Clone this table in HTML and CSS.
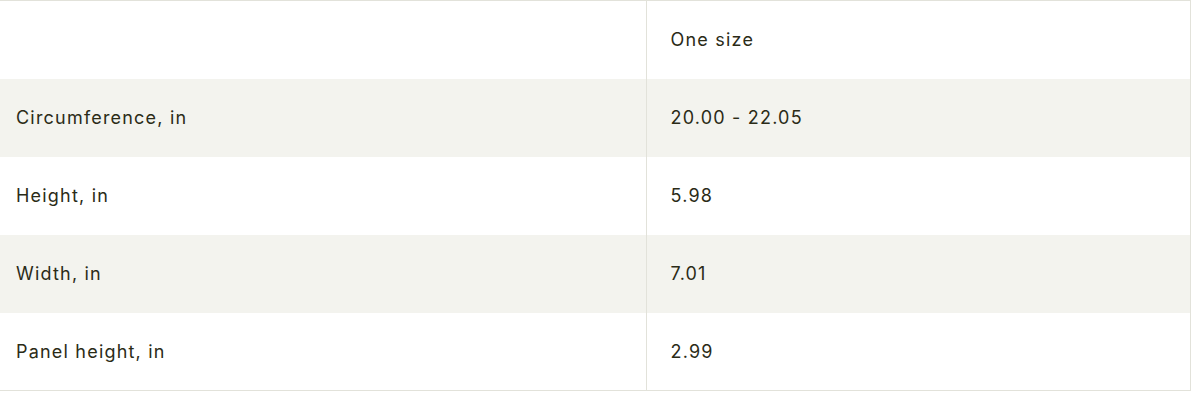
FILE: index.html
```html
<!DOCTYPE html>
<html lang="en">
<head>
<meta charset="utf-8">
<link rel="stylesheet" href="styles.css">
<title>Size chart</title>
</head>
<body>
<table class="sizes">
  <tbody>
    <tr class="row">
      <td class="label"></td>
      <td class="value">One size</td>
    </tr>
    <tr class="row alt">
      <td class="label">Circumference, in</td>
      <td class="value">20.00 - 22.05</td>
    </tr>
    <tr class="row">
      <td class="label">Height, in</td>
      <td class="value">5.98</td>
    </tr>
    <tr class="row alt">
      <td class="label">Width, in</td>
      <td class="value">7.01</td>
    </tr>
    <tr class="row">
      <td class="label">Panel height, in</td>
      <td class="value">2.99</td>
    </tr>
  </tbody>
</table>
</body>
</html>
```
FILE: styles.css
```css
html, body {
  margin: 0;
  padding: 0;
  background: #ffffff;
}
.sizes {
  width: 1191px;
  border-collapse: collapse;
  table-layout: fixed;
  font-family: Inter, "Liberation Sans", sans-serif;
  font-size: 18px;
  letter-spacing: 1.2px;
  color: #2b2b17;
  border-top: 1px solid #e2e2da;
  border-bottom: 1px solid #e2e2da;
  border-right: 1px solid #e2e2da;
}
.row {
  height: 78px;
}
.alt {
  background: #f3f3ee;
}
.label {
  width: 646px;
  padding: 0 16px;
  box-sizing: border-box;
  vertical-align: middle;
  border-right: 1px solid #e2e2da;
}
.value {
  padding: 0 24px;
  vertical-align: middle;
}
```
